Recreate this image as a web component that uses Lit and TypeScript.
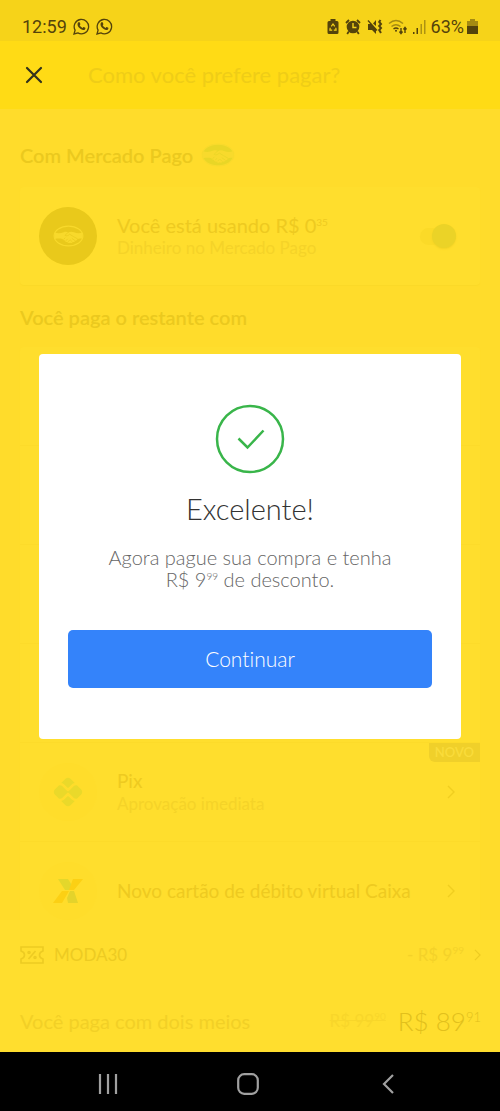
import { LitElement, html, css } from "lit";
import { customElement, state } from "lit/decorators.js";

const handshake = (sky: string, hands: string) => html`
  <svg class="hands" viewBox="0 0 34 24" role="img" aria-label="Mercado Pago">
    <ellipse cx="17" cy="12" rx="15.800" ry="10.800" fill=${sky} stroke=${hands} stroke-width="1.200"></ellipse>
    <path fill=${hands} d="M2 8.200c3.500 1.200 6.800.8 9.800-.4 1.800-.6 3.400-.6 5.200.2 2-.9 4-.9 6-.1 3 1.100 6 1.400 9 .3.700 2.300.7 4.500 0 6.800-2-.4-3.800-.2-5.200.4-.3 1.300-1.200 1.900-2.400 1.800-.5 1.200-1.500 1.700-2.600 1.400-.8 1.100-2 1.300-3 .7-1.200.8-2.600.4-3.200-.8-1.500.2-2.500-.5-2.800-1.800-1.200 0-2-.6-2.400-1.500-2.600-.5-5.400-.5-8.400 0-.7-2.300-.7-4.700 0-7z"></path>
    <path fill="none" stroke=${sky} stroke-width=".8" stroke-linecap="round" d="M17 8c-1.900.8-3 2.200-3.700 3.400 1.500.9 3.400.2 5-1.300 2.700 1.600 5.400 3.300 8.500 5M11.800 15.600l1.400-1.500M14.400 17l1.400-1.600M17 18l1.200-1.500M21 14.800l3 2.200M19 16.300l2 2"></path>
  </svg>`;

const whatsapp = html`
  <svg width="17" height="17" viewBox="0 0 17 17" aria-hidden="true">
    <path fill="none" stroke="currentColor" stroke-width="1.300" d="M1 16l1.100-3.900a7.200 7.200 0 1 1 2.800 2.800z"></path>
    <path fill="currentColor" d="M5.500 4.300c.7-.4 1.200-.1 1.400.6l.5 1.200c.1.500-.6.9-.7 1.200.5 1.200 1.500 2 2.800 2.600.5-.2.800-1.100 1.300-.9l1.500.8c.3.200.1 1.200-.4 1.600-1 .9-2.600.6-4.200-.4C5.900 9.900 4.500 8.200 4.500 6.300c0-.9.400-1.600 1-2z"></path>
  </svg>`;

const chevron = (cls: string) => html`
  <svg class=${cls} viewBox="0 0 8 14" aria-hidden="true">
    <path fill="none" stroke="currentColor" stroke-width="1.400" d="M1 1l6 6-6 6"></path>
  </svg>`;

const pixIcon = html`
  <svg width="30" height="30" viewBox="0 0 30 30" aria-hidden="true">
    <g fill="#ead92a">
      <path d="M12.500 1.800q2.500-2 5 0l4.300 4.300q-2 .3-3.300 1.600l-2.700 2.700q-.8.800-1.600 0l-2.700-2.700Q10.200 6.400 8.200 6.100z"></path>
      <path d="M12.500 28.200q2.500 2 5 0l4.300-4.300q-2-.3-3.300-1.600l-2.700-2.700q-.8-.8-1.600 0l-2.700 2.700q-1.300 1.300-3.300 1.600z"></path>
      <path d="M1.800 12.500l4.300-4.300q3 0 4.400 1.400l3.600 3.700q1.700 1.700 0 3.400l-3.600 3.700q-1.400 1.400-4.400 1.400l-4.300-4.300q-2-2.500 0-5z"></path>
      <path d="M28.200 12.500l-4.300-4.300q-3 0-4.400 1.400l-3.600 3.700q-1.700 1.700 0 3.400l3.600 3.700q1.400 1.400 4.400 1.400l4.300-4.300q2-2.500 0-5z"></path>
    </g>
    <path fill="none" stroke="#ffdc2b" stroke-width="1.200" d="M8 7l5.500 5.500q1.500 1.500 3 0L22 7M8 23l5.500-5.500q1.500-1.500 3 0L22 23"></path>
  </svg>`;

const caixaIcon = html`
  <svg width="30" height="24" viewBox="0 0 30 24" aria-hidden="true">
    <path fill="#e4d72b" d="M5 0h10l5 8-2 3h-6z"></path>
    <path fill="#fcd014" d="M20 0h10l-9 11h-5z"></path>
    <path fill="#fcd014" d="M9 12h7L9 24H0z"></path>
    <path fill="#e4d32b" d="M17 12h4l4 12H15l-1-5z"></path>
  </svg>`;

@customElement("app-root")
export class AppRoot extends LitElement {
  @state() private useBalance = true;

  static styles = css`
    :host {
      display: grid;
      grid-template-rows: auto minmax(0, 1fr) auto;
      height: 100vh;
      font-family: Lato, "Open Sans", sans-serif;
      font-size: 19px;
      font-variant-ligatures: none;
      background: #ffdd2d;
      overflow: hidden;
    }
    * { box-sizing: border-box; }
    svg { display: block; flex: none; }
    h1, h2, p { margin: 0; font-weight: 400; }
    sup { font-size: 10px; line-height: 0; vertical-align: 7px; }
    button { font: inherit; border: 0; background: none; padding: 0; cursor: pointer; }

    .status {
      display: flex;
      align-items: center;
      justify-content: space-between;
      height: 41px;
      padding: 12px 22px 0;
      background: #f6d319;
      color: #54430b;
      font-family: Roboto, sans-serif;
      font-size: 18px;
      line-height: 28px;
    }
    .status-group { display: flex; align-items: center; gap: 5px; }
    .status-time { gap: 6px; }
    .charge { display: flex; align-items: center; gap: 3px; }

    .app {
      position: relative;
      display: grid;
      grid-template-rows: auto minmax(0, 1fr) auto;
      min-height: 0;
    }
    .bar {
      display: flex;
      align-items: center;
      gap: 45px;
      height: 68px;
      padding: 0 25px;
      background: #ffdb15;
      color: #efcd17;
    }
    .bar h1 { font-size: 22px; line-height: 28px; }
    .close { color: #33331c; }

    .content { overflow: hidden; min-height: 0; padding: 32px 20px 0; background: #ffdc2b; }
    .section {
      display: flex;
      align-items: center;
      gap: 8px;
      height: 28px;
      font-size: 20px;
      font-weight: 600;
      color: #ebc91e;
    }
    .hands { width: 34px; height: 24px; }
    .card { background: #ffde2d; border-radius: 4px; box-shadow: 0 1px 1px #fbd928; }
    .balance {
      display: flex;
      align-items: center;
      gap: 20px;
      height: 98px;
      margin: 18px 0;
      padding: 0 24px 0 19px;
    }
    .avatar {
      display: grid;
      place-items: center;
      width: 58px;
      height: 58px;
      border-radius: 50%;
      background: #e9c91b;
      flex: none;
    }
    .plain { background: #ffdd2b; }
    .avatar .hands { width: 31px; height: 22px; }
    .texts { flex: 1; min-width: 0; }
    .title { font-size: 19px; line-height: 24px; color: #eeca20; }
    .balance .title { font-size: 20px; }
    .sub { font-size: 17px; line-height: 22px; color: #f5d328; }

    .switch {
      appearance: none;
      display: flex;
      align-items: center;
      justify-content: flex-end;
      width: 36px;
      height: 17px;
      margin: 0;
      border-radius: 9px;
      background: #fbda28;
    }
    .switch::before {
      content: "";
      width: 24px;
      height: 24px;
      flex: none;
      border-radius: 50%;
      background: #ebd327;
      box-shadow: 0 1px 2px #f2d225;
    }
    .switch:not(:checked) { justify-content: flex-start; }

    .list { margin-top: 16px; }
    .row {
      position: relative;
      display: flex;
      align-items: center;
      gap: 20px;
      height: 99px;
      padding: 0 25px 0 19px;
      border-bottom: 1px solid #fddb2a;
      text-decoration: none;
      color: #eeca20;
    }
    .row .title { color: inherit; }
    .go { width: 8px; height: 14px; color: #f0ce20; }
    .badge {
      position: absolute;
      top: 0;
      right: 0;
      padding: 0 6px;
      border-radius: 0 0 0 6px;
      background: #f0d02a;
      color: #fadc3a;
      font-size: 13px;
      font-weight: 600;
      line-height: 19px;
    }

    .footer { padding: 0 19px 0 20px; background: #ffde2e; color: #f2d026; }
    .coupon, .total { display: flex; align-items: center; width: 100%; }
    .coupon { height: 69px; gap: 10px; font-size: 17px; color: #edcb22; }
    .coupon .amount { margin-left: auto; color: #f4d229; }
    .go-small { width: 7px; height: 12px; }
    .total { height: 63px; gap: 12px; font-size: 20px; }
    .old { margin-left: auto; color: #f8d62a; font-size: 17px; }
    .price { color: #e2c01c; font-size: 26px; font-weight: 300; }
    .price sup { font-size: 13px; vertical-align: 9px; }

    .overlay {
      position: absolute;
      inset: 0;
      display: grid;
      align-items: center;
      padding: 0 39px;
    }
    .dialog {
      display: flex;
      flex-direction: column;
      align-items: center;
      padding: 50px 29px 51px;
      border-radius: 4px;
      background: #fff;
      text-align: center;
    }
    .dialog h2 {
      margin-top: 16px;
      font-size: 29px;
      font-weight: 300;
      line-height: 38px;
      color: #333;
    }
    .dialog p {
      margin: 18px 0 40px;
      font-size: 20px;
      font-weight: 300;
      line-height: 22px;
      color: #666;
    }
    .dialog sup { font-size: 10px; }
    .primary {
      width: 100%;
      height: 58px;
      padding-bottom: 2px;
      border-radius: 5px;
      background: #3483fa;
      color: #fff;
      font-size: 21px;
      font-weight: 300;
    }

    .nav {
      display: flex;
      align-items: center;
      justify-content: center;
      gap: 116px;
      height: 59px;
      padding: 4px 4px 0 0;
      background: #000;
      color: #a0a0a0;
    }
    .nav button { display: grid; place-items: center; width: 24px; height: 28px; color: inherit; }
  `;

  render() {
    return html`
      <header class="status">
        <div class="status-group status-time"><span>12:59</span>${whatsapp}${whatsapp}</div>
        <div class="status-group">
          <svg width="12" height="16" viewBox="0 0 12 16" aria-hidden="true">
            <path fill="currentColor" d="M3.500 0h5v2H10q1.500 0 1.500 1.500v10Q11.500 15 10 15H2Q.5 15 .5 13.500v-10Q.5 2 2 2h1.500z"></path>
            <path fill="none" stroke="#f6d319" stroke-width="1.200" d="M4.300 7.300L6 5l1.700 2.300M3.200 8.700l-.3 2.500h2.300M8.800 8.700l.3 2.500H6.800"></path>
          </svg>
          <svg width="18" height="16" viewBox="-1 0 18 16" aria-hidden="true">
            <circle cx="8" cy="8" r="6.300" fill="currentColor"></circle>
            <path fill="none" stroke="currentColor" stroke-width="1.800" d="M1 4l3-3M15 4l-3-3M3.800 12.500L2.200 15M12.200 12.500l1.600 2.500"></path>
            <path fill="none" stroke="#f6d319" stroke-width="1.400" d="M8 4v4.500h3.500"></path>
          </svg>
          <svg width="16" height="16" viewBox="0 0 16 16" aria-hidden="true">
            <path fill="currentColor" d="M1 5h3l5 5v5l-4-4H1zM9 1v6L6 4.500z"></path>
            <path fill="none" stroke="currentColor" stroke-width="1.300" d="M1 1.500l9 10"></path>
            <path fill="none" stroke="currentColor" stroke-width="2" d="M13.500 1l-1.300 2 1.800 2-1.800 2 1.800 2-1.800 2 1.800 3"></path>
          </svg>
          <svg width="20" height="16" viewBox="0 0 20 16" aria-hidden="true">
            <g fill="none" stroke="currentColor" stroke-width="1.400">
              <path opacity=".5" d="M1 4.500q7-6 14 0M3.500 7.500q4.500-3.500 9 0"></path>
              <path d="M5.500 10q2.500-2 5 0"></path>
              <path d="M13 9v5M11.500 12.500l1.500 2 1.500-2M17 14V9M15.500 10.500l1.500-2 1.500 2"></path>
            </g>
            <circle cx="8" cy="11.800" r="1" fill="currentColor"></circle>
          </svg>
          <svg width="13" height="16" viewBox="0 0 13 16" aria-hidden="true">
            <path fill="currentColor" d="M0 13h1.500v2H0zM3.500 9H5v6H3.500z"></path>
            <path fill="currentColor" opacity=".45" d="M7.500 5H9v10H7.500zM11 1h1.500v14H11z"></path>
          </svg>
          <span class="charge">
            63%
            <svg width="11" height="16" viewBox="0 0 11 16" aria-hidden="true">
              <path fill="currentColor" opacity=".5" d="M3 0h5v2h3v5H0V2h3z"></path>
              <path fill="currentColor" d="M0 7h11v8H0z"></path>
            </svg>
          </span>
        </div>
      </header>

      <div class="app">
        <header class="bar">
          <button class="close" aria-label="Fechar">
            <svg width="18" height="18" viewBox="0 0 18 18">
              <path fill="none" stroke="currentColor" stroke-width="2.200" stroke-linecap="round" d="M2 2l14 14M16 2L2 16"></path>
            </svg>
          </button>
          <h1>Como você prefere pagar?</h1>
        </header>

        <main class="content">
          <h2 class="section">Com Mercado Pago ${handshake("#e9d626", "#f8da2c")}</h2>
          <label class="card balance">
            <span class="avatar">${handshake("#e9c91b", "#f8d92b")}</span>
            <span class="texts">
              <p class="title">Você está usando R$ 0<sup>35</sup></p>
              <p class="sub">Dinheiro no Mercado Pago</p>
            </span>
            <input
              class="switch"
              type="checkbox"
              .checked=${this.useBalance}
              @change=${(e: Event) => (this.useBalance = (e.target as HTMLInputElement).checked)}
            />
          </label>
          <h2 class="section">Você paga o restante com</h2>
          <div class="card list">
            <div class="row"></div>
            <div class="row"></div>
            <div class="row"></div>
            <div class="row"></div>
            <a class="row" href="#pix">
              <span class="badge">NOVO</span>
              <span class="avatar plain">${pixIcon}</span>
              <span class="texts">
                <p class="title">Pix</p>
                <p class="sub">Aprovação imediata</p>
              </span>
              ${chevron("go")}
            </a>
            <a class="row" href="#caixa">
              <span class="avatar plain">${caixaIcon}</span>
              <span class="texts"><p class="title">Novo cartão de débito virtual Caixa</p></span>
              ${chevron("go")}
            </a>
          </div>
        </main>

        <footer class="footer">
          <button class="coupon">
            <svg width="24" height="18" viewBox="0 0 24 18" aria-hidden="true">
              <g fill="none" stroke="currentColor" stroke-width="1.600">
                <path d="M1 1h22v4q-3.500 1-3.500 4t3.500 4v4H1v-4q3.500-1 3.500-4T1 5z"></path>
                <path d="M8.500 13l7-8"></path>
                <circle cx="9" cy="6.500" r="1"></circle>
                <circle cx="15" cy="11.500" r="1"></circle>
              </g>
            </svg>
            <span>MODA30</span>
            <span class="amount">- R$ 9<sup>99</sup></span>
            ${chevron("go-small")}
          </button>
          <div class="total">
            <span>Você paga com dois meios</span>
            <s class="old">R$ 99<sup>90</sup></s>
            <span class="price">R$ 89<sup>91</sup></span>
          </div>
        </footer>

        <div class="overlay">
          <section class="dialog" role="dialog" aria-labelledby="done">
            <svg width="70" height="70" viewBox="0 0 70 70" aria-hidden="true">
              <g fill="none" stroke="#39b54a" stroke-width="2.500">
                <circle cx="35" cy="35" r="33"></circle>
                <path d="M23.500 34.500l9 9L48.500 26.500"></path>
              </g>
            </svg>
            <h2 id="done">Excelente!</h2>
            <p>Agora pague sua compra e tenha<br />R$ 9<sup>99</sup> de desconto.</p>
            <button class="primary">Continuar</button>
          </section>
        </div>
      </div>

      <nav class="nav">
        <button aria-label="Recentes">
          <svg width="20" height="20" viewBox="0 0 20 20">
            <path fill="none" stroke="currentColor" stroke-width="2.200" d="M2 0v20M10 0v20M18 0v20"></path>
          </svg>
        </button>
        <button aria-label="Início">
          <svg width="22" height="22" viewBox="0 0 22 22">
            <rect x="1.200" y="1.200" width="19.600" height="19.600" rx="6" fill="none" stroke="currentColor" stroke-width="2.200"></rect>
          </svg>
        </button>
        <button aria-label="Voltar">
          <svg width="12" height="20" viewBox="0 0 12 20">
            <path fill="none" stroke="currentColor" stroke-width="2.200" d="M11 1L2 10l9 9"></path>
          </svg>
        </button>
      </nav>
    `;
  }
}
